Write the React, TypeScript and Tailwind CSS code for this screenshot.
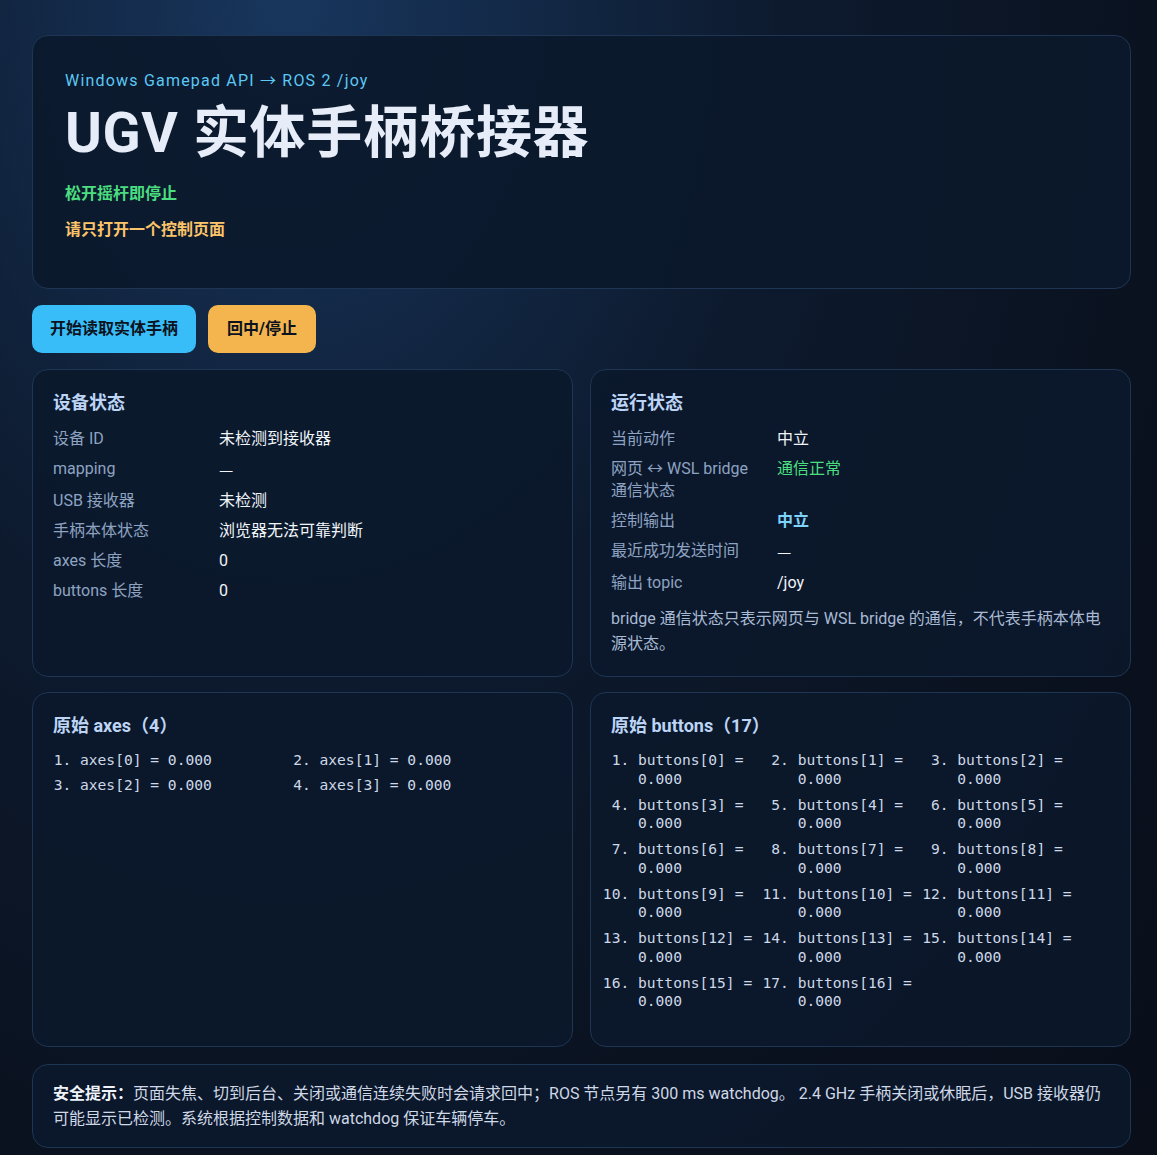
const deviceRows: [string, string][] = [
  ["设备 ID", "未检测到接收器"],
  ["mapping", "—"],
  ["USB 接收器", "未检测"],
  ["手柄本体状态", "浏览器无法可靠判断"],
  ["axes 长度", "0"],
  ["buttons 长度", "0"],
];

type RunRow = { label: string; value: string; tone?: "ok" | "accent" };

const runRows: RunRow[] = [
  { label: "当前动作", value: "中立" },
  { label: "网页 ↔ WSL bridge 通信状态", value: "通信正常", tone: "ok" },
  { label: "控制输出", value: "中立", tone: "accent" },
  { label: "最近成功发送时间", value: "—" },
  { label: "输出 topic", value: "/joy" },
];

const axes = Array.from({ length: 4 }, (_, i) => `axes[${i}] = 0.000`);
const buttons = Array.from({ length: 17 }, (_, i) => `buttons[${i}] = 0.000`);

function Card({ title, children, className = "" }: { title?: string; children: React.ReactNode; className?: string }) {
  return (
    <section className={`rounded-2xl border border-[#1e3553] bg-[#0b182b]/90 px-5 pt-5 ${className}`}>
      {title && <h2 className="mb-3 text-[18px] font-bold leading-[26px] text-[#bcd4f5]">{title}</h2>}
      {children}
    </section>
  );
}

function valueClass(tone?: "ok" | "accent") {
  if (tone === "ok") return "text-[#4ade80]";
  if (tone === "accent") return "font-bold text-[#7dd3fc]";
  return "text-[#f1f5f9]";
}

// the em dash reads wider in the CJK face, like the original
function Val({ text }: { text: string }) {
  return text === "—" ? <span className="font-['Noto_Sans_CJK_SC']">—</span> : <>{text}</>;
}

export default function App() {
  return (
    <div className="min-h-screen bg-[radial-gradient(ellipse_at_25%_0%,#18365d_0%,#0d1a2e_40%,#0a111e_75%,#090e19_100%)] pt-[35px] pb-8 font-['Roboto','Noto_Sans_CJK_SC',sans-serif] text-[16px]">
      <div className="ml-8 flex w-[1099px] flex-col">
        {/* header */}
        <header className="rounded-2xl border border-[#1e3553] bg-[#0b182b]/90 px-8 pt-[33px] pb-[46px]">
          <p className="mb-[9px] leading-6 tracking-[1.2px] text-[#5cc8f5]">Windows Gamepad API → ROS 2 /joy</p>
          <h1 className="text-[56px] font-bold leading-[62px] tracking-[0.6px] text-[#e6edf8]">UGV 实体手柄桥接器</h1>
          <p className="mt-[18px] leading-6 font-bold text-[#4ade80]">松开摇杆即停止</p>
          <p className="mt-3 leading-6 font-bold text-[#fcc46a]">请只打开一个控制页面</p>
        </header>

        {/* actions */}
        <div className="mt-4 flex gap-3">
          <button className="h-12 rounded-[10px] bg-[#38bdf8] px-[18px] font-bold text-[#0b1220]">开始读取实体手柄</button>
          <button className="h-12 rounded-[10px] bg-[#f4b54e] px-[19px] font-bold text-[#0b1220]">回中/停止</button>
        </div>

        {/* status */}
        <div className="mt-4 grid grid-cols-2 gap-[17px]">
          <Card title="设备状态" className="pb-5">
            <div className="grid grid-cols-[150px_1fr] gap-x-4 gap-y-2 leading-[22px]">
              {deviceRows.map(([k, v]) => (
                <div key={k} className="contents">
                  <span className="text-[#8ea3c2]">{k}</span>
                  <span className="text-[#f1f5f9]"><Val text={v} /></span>
                </div>
              ))}
            </div>
          </Card>
          <Card title="运行状态" className="pb-5">
            <div className="grid grid-cols-[150px_1fr] gap-x-4 gap-y-2 leading-[22px]">
              {runRows.map((r) => (
                <div key={r.label} className="contents">
                  <span className="text-[#8ea3c2]">{r.label}</span>
                  <span className={valueClass(r.tone)}><Val text={r.value} /></span>
                </div>
              ))}
            </div>
            <p className="mt-3 leading-[25px] text-[#a9bad4]">
              bridge 通信状态只表示网页与 WSL bridge 的通信，不代表手柄本体电源状态。
            </p>
          </Card>
        </div>

        {/* raw values */}
        <div className="mt-[15px] grid grid-cols-2 gap-[17px]">
          <Card title="原始 axes（4）" className="pb-[35px]">
            <ol className="mt-[4px] grid list-outside list-decimal grid-cols-2 gap-x-[7px] gap-y-[6.5px] pl-[27px] font-['DejaVu_Sans_Mono',monospace] text-[14.6px] leading-[18.5px] text-[#cdd8e8]">
              {axes.map((a) => (
                <li key={a}>{a}</li>
              ))}
            </ol>
          </Card>
          <Card title="原始 buttons（17）" className="pb-[35px]">
            <ol className="mt-[4px] grid list-outside list-decimal grid-cols-3 gap-x-[7px] gap-y-[7.5px] pl-[27px] font-['DejaVu_Sans_Mono',monospace] text-[14.6px] leading-[18.5px] text-[#cdd8e8]">
              {buttons.map((b) => (
                <li key={b}>{b}</li>
              ))}
            </ol>
          </Card>
        </div>

        {/* safety */}
        <section className="mt-[17px] rounded-2xl border border-[#1e3553] bg-[#0b182b]/90 px-5 py-4 leading-[25px] text-[#cfd8e6]">
          <strong className="text-[#eef3fa]">安全提示：</strong>
          页面失焦、切到后台、关闭或通信连续失败时会请求回中；ROS 节点另有 300 ms watchdog。 2.4 GHz 手柄关闭或休眠后，USB 接收器仍可能显示已检测。系统根据控制数据和 watchdog 保证车辆停车。
        </section>
      </div>
    </div>
  );
}
